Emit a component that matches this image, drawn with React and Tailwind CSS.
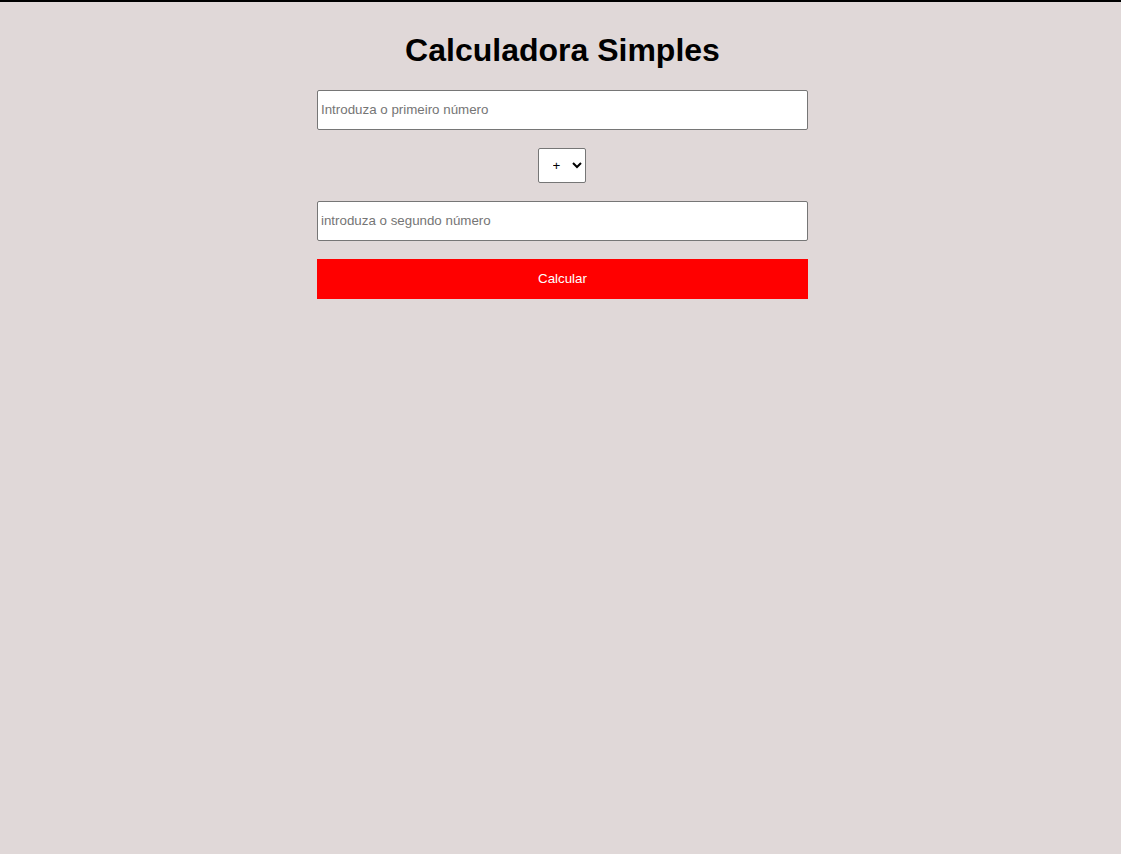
export default function App() {
  return (
    <div className="min-h-[854px] bg-[#e0d8d8] border-t-2 border-black font-['Liberation_Sans',Arial,sans-serif]">
      <div className="pl-[4px]">
        <h1 className="mt-[24px] mb-[16px] text-center text-[32px] leading-[48px] font-bold text-black">
          Calculadora Simples
        </h1>
        <div className="mx-auto w-[491px] flex flex-col items-center gap-[18px] text-[13.33px]">
          <input
            type="text"
            placeholder="Introduza o primeiro número"
            className="w-full h-[40px] px-[3px] pb-[2px] bg-white border border-[#767676] rounded-[2px] placeholder:text-[#757575]"
          />
          <select className="w-[48px] h-[35px] mr-[2px] pl-[10px] bg-white border border-[#767676] rounded-[2px] text-black">
            <option>+</option>
            <option>-</option>
            <option>*</option>
            <option>/</option>
          </select>
          <input
            type="text"
            placeholder="introduza o segundo número"
            className="w-full h-[40px] px-[3px] pb-[2px] bg-white border border-[#767676] rounded-[2px] placeholder:text-[#757575]"
          />
          <button className="w-full h-[40px] pb-[1px] bg-[#ff0000] text-white">
            Calcular
          </button>
        </div>
      </div>
    </div>
  );
}
